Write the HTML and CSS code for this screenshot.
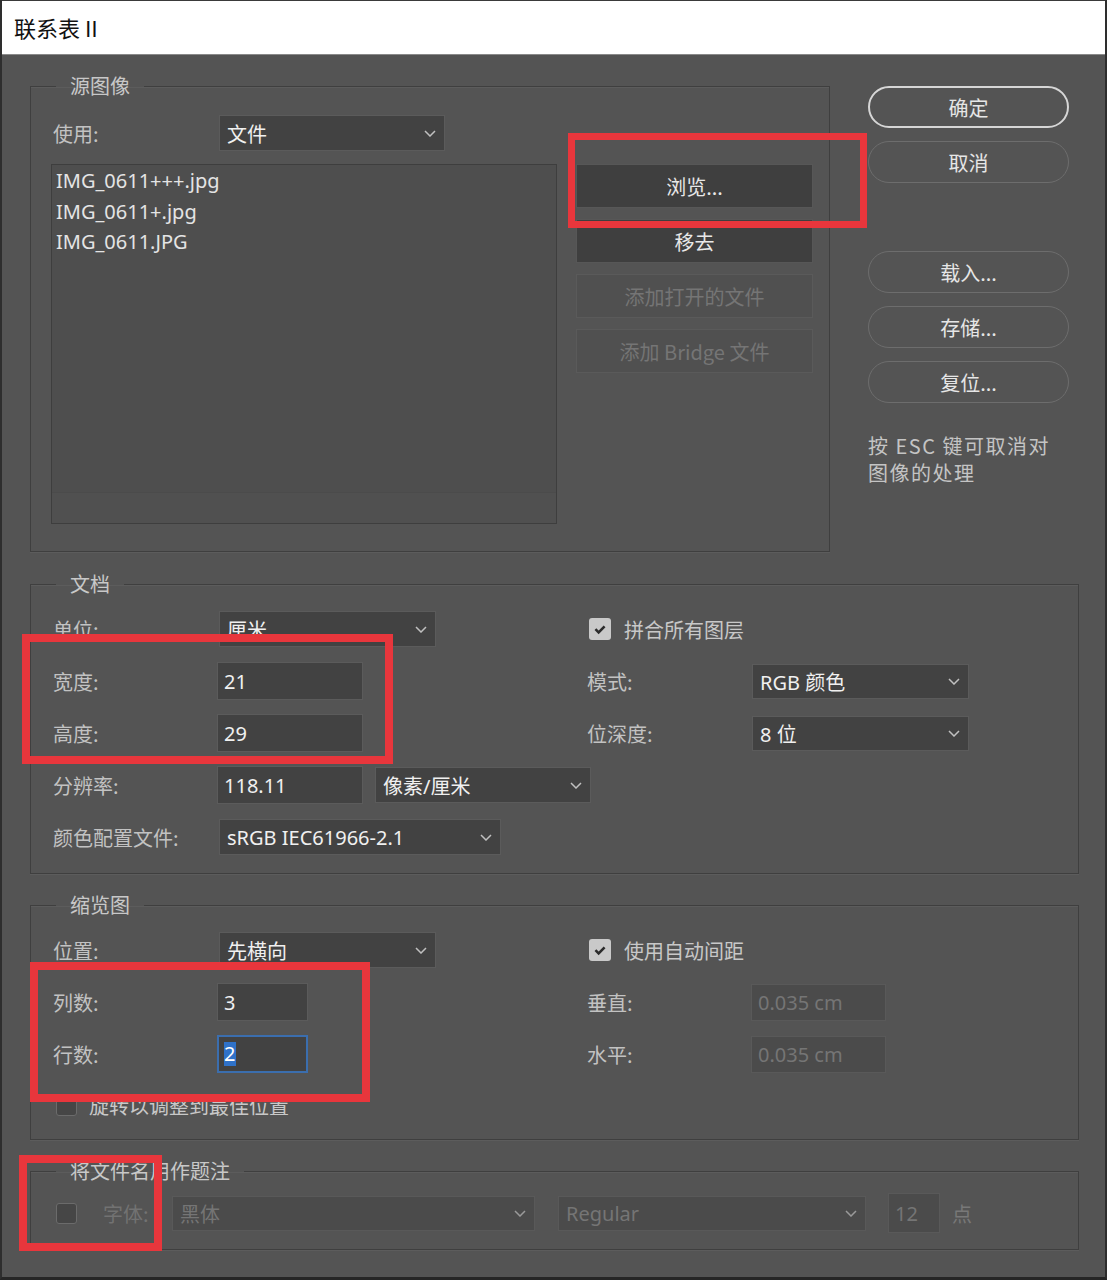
FILE: index.html
```html
<!DOCTYPE html>
<html lang="zh-CN">
<head>
    <meta charset="UTF-8">
    <meta name="viewport" content="width=device-width, initial-scale=1.0">
    <title>联系表 II</title>
    <link rel="stylesheet" href="styles.css">
</head>
<body>

<div class="window">
    <div class="titlebar">联系表 II</div>

    <div class="dialog">
        <div class="top">
            <!-- 源图像 -->
            <fieldset class="group source">
                <legend>源图像</legend>
                <div class="line">
                    <span class="label">使用:</span>
                    <div class="select use-select"><span>文件</span><svg class="chev" viewBox="0 0 12 7"><path d="M1 1l5 5 5-5"/></svg></div>
                </div>
                <div class="source-body">
                    <div class="filelist">
                        <div class="files">
                            <div>IMG_0611+++.jpg</div>
                            <div>IMG_0611+.jpg</div>
                            <div>IMG_0611.JPG</div>
                        </div>
                        <div class="hscroll"></div>
                    </div>
                    <div class="src-buttons">
                        <button class="btn">浏览...</button>
                        <button class="btn">移去</button>
                        <button class="btn" disabled>添加打开的文件</button>
                        <button class="btn" disabled>添加 Bridge 文件</button>
                    </div>
                </div>
            </fieldset>

            <div class="side">
                <button class="pill default">确定</button>
                <button class="pill">取消</button>
                <button class="pill spaced">载入...</button>
                <button class="pill">存储...</button>
                <button class="pill">复位...</button>
                <p class="hint">按 ESC 键可取消对<br>图像的处理</p>
            </div>
        </div>

        <!-- 文档 -->
        <fieldset class="group">
            <legend>文档</legend>
            <div class="cols">
                <div class="col">
                    <div class="line row">
                        <span class="label">单位:</span>
                        <div class="select w217"><span>厘米</span><svg class="chev" viewBox="0 0 12 7"><path d="M1 1l5 5 5-5"/></svg></div>
                    </div>
                    <div class="line row">
                        <span class="label">宽度:</span>
                        <div class="input w146">21</div>
                    </div>
                    <div class="line row">
                        <span class="label">高度:</span>
                        <div class="input w146">29</div>
                    </div>
                    <div class="line row">
                        <span class="label">分辨率:</span>
                        <div class="input w146">118.11</div>
                        <div class="select unit-select"><span>像素/厘米</span><svg class="chev" viewBox="0 0 12 7"><path d="M1 1l5 5 5-5"/></svg></div>
                    </div>
                    <div class="line row">
                        <span class="label">颜色配置文件:</span>
                        <div class="select w282"><span>sRGB IEC61966-2.1</span><svg class="chev" viewBox="0 0 12 7"><path d="M1 1l5 5 5-5"/></svg></div>
                    </div>
                </div>
                <div class="col">
                    <div class="line row">
                        <span class="check on"><svg viewBox="0 0 14 14"><path d="M3 7.2l2.8 2.8L11 4.6"/></svg></span>
                        <span class="check-label">拼合所有图层</span>
                    </div>
                    <div class="line row">
                        <span class="label">模式:</span>
                        <div class="select w217 short"><span>RGB 颜色</span><svg class="chev" viewBox="0 0 12 7"><path d="M1 1l5 5 5-5"/></svg></div>
                    </div>
                    <div class="line row">
                        <span class="label">位深度:</span>
                        <div class="select w217 short"><span>8 位</span><svg class="chev" viewBox="0 0 12 7"><path d="M1 1l5 5 5-5"/></svg></div>
                    </div>
                </div>
            </div>
        </fieldset>

        <!-- 缩览图 -->
        <fieldset class="group thumbs">
            <legend>缩览图</legend>
            <div class="cols">
                <div class="col">
                    <div class="line row">
                        <span class="label">位置:</span>
                        <div class="select w217"><span>先横向</span><svg class="chev" viewBox="0 0 12 7"><path d="M1 1l5 5 5-5"/></svg></div>
                    </div>
                    <div class="line row">
                        <span class="label">列数:</span>
                        <div class="input w91">3</div>
                    </div>
                    <div class="line row">
                        <span class="label">行数:</span>
                        <div class="input w91 focus"><span class="sel">2</span></div>
                    </div>
                    <div class="line row last">
                        <span class="check off small"></span>
                        <span class="check-label">旋转以调整到最佳位置</span>
                    </div>
                </div>
                <div class="col">
                    <div class="line row">
                        <span class="check on"><svg viewBox="0 0 14 14"><path d="M3 7.2l2.8 2.8L11 4.6"/></svg></span>
                        <span class="check-label">使用自动间距</span>
                    </div>
                    <div class="line row">
                        <span class="label">垂直:</span>
                        <div class="input w135 dim">0.035 cm</div>
                    </div>
                    <div class="line row">
                        <span class="label">水平:</span>
                        <div class="input w135 dim">0.035 cm</div>
                    </div>
                </div>
            </div>
        </fieldset>

        <!-- 题注 -->
        <fieldset class="group caption">
            <legend>将文件名用作题注</legend>
            <div class="line row">
                <span class="check off small"></span>
                <span class="label font-label">字体:</span>
                <div class="select dim font-select"><span>黑体</span><svg class="chev" viewBox="0 0 12 7"><path d="M1 1l5 5 5-5"/></svg></div>
                <div class="select dim style-select"><span>Regular</span><svg class="chev" viewBox="0 0 12 7"><path d="M1 1l5 5 5-5"/></svg></div>
                <div class="input dim size-input">12</div>
                <span class="label dim-text">点</span>
            </div>
        </fieldset>
    </div>
</div>

<!-- red annotation boxes drawn over the screenshot -->
<div class="mark mark-browse"></div>
<div class="mark mark-size"></div>
<div class="mark mark-grid"></div>
<div class="mark mark-caption"></div>

</body>
</html>
```

FILE: styles.css
```css
body {
    margin: 0;
    padding: 0;
    background-color: #545454;
    font-family: "Noto Sans", "Noto Sans CJK SC", sans-serif;
    color: #c4c4c4;
}
.window {
    width: 1107px;
    height: 1280px;
    box-sizing: border-box;
    border-left: 2px solid #2e2e2e;
    border-right: 2px solid #2e2e2e;
    border-bottom: 3px solid #262626;
    background: #545454;
    overflow: hidden;
}
.titlebar {
    height: 55px;
    box-sizing: border-box;
    background: #fff;
    border-top: 1px solid #3a3a3a;
    border-bottom: 1px solid #8a8a8a;
    padding-left: 12px;
    font-family: "Noto Sans CJK SC", sans-serif;
    font-size: 22px;
    line-height: 53px;
    color: #111;
}
.dialog {
    padding: 19px 0 0 28px;
}
.top {
    display: flex;
    align-items: flex-start;
}

/* group boxes */
.group {
    margin: 20px 0 0 0;
    padding: 7px 20px 10px 22px;
    width: 1049px;
    box-sizing: border-box;
    border: 1px solid #3f3f3f;
    box-shadow: 0 1px 0 #5c5c5c, inset 0 1px 0 #5c5c5c;
    min-width: 0;
}
.group legend {
    padding: 0 14px;
    margin-left: 3px;
    font-family: "Noto Sans CJK SC", sans-serif;
    font-size: 20px;
    line-height: 24px;
    color: #c8c8c8;
}
.group.source {
    margin-top: 0;
    width: 800px;
    padding: 17px 10px 27px 22px;
    flex-shrink: 0;
}
.group.thumbs {
    margin-top: 19px;
    padding-bottom: 9px;
}
.group.caption {
    margin-top: 19px;
    padding-top: 4px;
    padding-bottom: 10px;
}

.line {
    display: flex;
    align-items: center;
}
.label {
    width: 164px;
    flex-shrink: 0;
    font-family: "Noto Sans CJK SC", sans-serif;
    font-size: 20px;
    color: #c2c2c2;
}
.row {
    height: 52px;
}
.row.last {
    height: 50px;
}
.cols {
    display: grid;
    grid-template-columns: 534px 1fr;
}

/* controls */
.select, .input {
    box-sizing: border-box;
    flex-shrink: 0;
    background: #424242;
    border: 1px solid #5b5b5b;
    font-size: 20px;
    color: #f0f0f0;
    display: flex;
    align-items: center;
}
.select {
    height: 36px;
    margin-left: 2px;
    padding: 0 8px 0 7px;
    justify-content: space-between;
}
.select.short {
    height: 35px;
    margin-left: 1px;
}
.input {
    height: 38px;
    padding-left: 6px;
}
.chev {
    width: 12px;
    height: 7px;
    fill: none;
    stroke: #c0c0c0;
    stroke-width: 1.5;
}
.use-select { width: 226px; }
.w217 { width: 217px; }
.w282 { width: 282px; }
.w146 { width: 146px; }
.w91 { width: 91px; }
.w135 { width: 135px; height: 37px; }
.unit-select {
    width: 216px;
    margin-left: 12px;
}
.input.focus {
    border: 2px solid #3b6eae;
    padding-left: 5px;
}
.input .sel {
    background: #2f72c9;
    color: #fff;
    line-height: 24px;
    padding-right: 1px;
}
.dim {
    color: #757575;
    background: #4b4b4b;
    border-color: #595959;
}
.dim .chev {
    stroke: #9a9a9a;
}

/* checkboxes */
.check {
    width: 22px;
    height: 22px;
    box-sizing: border-box;
    border-radius: 3px;
    flex-shrink: 0;
    margin-left: 2px;
    display: flex;
    align-items: center;
    justify-content: center;
}
.check.on {
    background: #c9c9c9;
}
.check.on svg {
    width: 16px;
    height: 16px;
    fill: none;
    stroke: #2c2c2c;
    stroke-width: 2.2;
}
.check.off {
    background: #464646;
    border: 1px solid #6b6b6b;
}
.check.small {
    width: 21px;
    height: 21px;
    margin-left: 3px;
}
.check-label {
    margin-left: 13px;
    font-family: "Noto Sans CJK SC", sans-serif;
    font-size: 20px;
    color: #c8c8c8;
}
.row.last .check-label {
    margin-left: 12px;
}

/* source image box */
.source-body {
    display: flex;
    margin-top: 13px;
}
.filelist {
    width: 506px;
    height: 360px;
    flex-shrink: 0;
    margin-left: -2px;
    box-sizing: border-box;
    border: 1px solid #3e3e3e;
    background: #4e4e4e;
    display: flex;
    flex-direction: column;
}
.files {
    flex: 1;
    padding: 1px 0 0 4px;
    font-size: 20px;
    line-height: 30.5px;
    color: #e4e4e4;
}
.hscroll {
    height: 30px;
    background: #505050;
    border-top: 1px solid #4b4b4b;
}
.src-buttons {
    display: flex;
    flex-direction: column;
    gap: 11px;
    margin-left: 19px;
    flex-shrink: 0;
}
.btn {
    width: 237px;
    height: 44px;
    background: #3f3f3f;
    border: 1px solid #575757;
    color: #e8e8e8;
    font-family: "Noto Sans CJK SC", sans-serif;
    font-size: 20px;
    padding: 0;
}
.btn:disabled {
    background: #505050;
    border-color: #5a5a5a;
    color: #757575;
}

/* right column */
.side {
    width: 201px;
    margin-left: 38px;
    padding-top: 12px;
    display: flex;
    flex-direction: column;
    gap: 13px;
}
.pill {
    height: 42px;
    border-radius: 21px;
    background: transparent;
    border: 1.5px solid #6d6d6d;
    color: #e6e6e6;
    font-family: "Noto Sans CJK SC", sans-serif;
    font-size: 20px;
    padding: 0;
}
.pill.default {
    border: 2px solid #d6d6d6;
}
.pill.spaced {
    margin-top: 55px;
}
.hint {
    margin: 16px 0 0 0;
    font-family: "Noto Sans CJK SC", sans-serif;
    font-size: 20px;
    line-height: 27px;
    letter-spacing: 1.5px;
    color: #c4c4c4;
}

/* caption row */
.font-label {
    width: 69px;
    margin-left: 26px;
    color: #727272;
}
.font-select {
    width: 363px;
    height: 35px;
    margin-left: 0;
}
.style-select {
    width: 308px;
    height: 35px;
    margin-left: 23px;
}
.size-input {
    width: 52px;
    height: 40px;
    margin-left: 22px;
}
.dim-text {
    width: auto;
    margin-left: 12px;
    color: #787878;
}

/* red annotation boxes */
.mark {
    position: absolute;
    box-sizing: border-box;
    border: 8px solid #e8363c;
}
.mark-browse {
    left: 568px;
    top: 133px;
    width: 299px;
    height: 95px;
    border-width: 7px;
}
.mark-size {
    left: 22px;
    top: 634px;
    width: 371px;
    height: 130px;
}
.mark-grid {
    left: 30px;
    top: 962px;
    width: 340px;
    height: 140px;
}
.mark-caption {
    left: 19px;
    top: 1155px;
    width: 143px;
    height: 96px;
}
```
